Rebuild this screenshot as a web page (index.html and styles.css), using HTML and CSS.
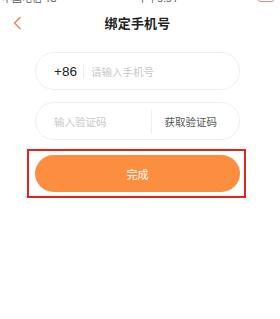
FILE: index.html
```html
<!DOCTYPE html>
<html lang="zh">
<head>
<meta charset="utf-8">
<link rel="stylesheet" href="styles.css">
</head>
<body>
<div class="status">
  <div class="status-inner">
    <span class="carrier">中国电信 4G</span>
    <span class="time">下午3:34</span>
    <span class="battery"></span>
  </div>
</div>
<header class="nav">
  <svg class="back" width="10" height="14" viewBox="0 0 10 14"><path d="M8 1.5 L2.5 7 L8 12.5" fill="none" stroke="#ec8a4c" stroke-width="1.6" stroke-linecap="round" stroke-linejoin="round"/></svg>
  <h1 class="title">绑定手机号</h1>
</header>
<main class="form">
  <div class="field">
    <span class="prefix">+86</span>
    <span class="vsep"></span>
    <span class="ph">请输入手机号</span>
  </div>
  <div class="field code">
    <span class="ph grow">输入验证码</span>
    <span class="vsep tall"></span>
    <span class="getcode">获取验证码</span>
  </div>
  <div class="highlight">
    <button class="submit">完成</button>
  </div>
</main>
</body>
</html>
```
FILE: styles.css
```css
* { box-sizing: border-box; }
html, body { margin: 0; padding: 0; background: #fff; }
body {
  width: 280px;
  height: 319px;
  overflow: hidden;
  font-family: "Noto Sans CJK SC", "Liberation Sans", sans-serif;
  color: #333;
}
.status {
  height: 3px;
  overflow: hidden;
  display: flex;
  align-items: flex-end;
}
.status-inner {
  width: 100%;
  height: 10px;
  flex: none;
  display: flex;
  justify-content: space-between;
  align-items: center;
  padding: 0 6px 0 2px;
  font-size: 10px;
  line-height: 10px;
  color: #555;
}
.battery { width: 16px; height: 7px; border: 1px solid #e88; border-radius: 2px; }
.nav {
  height: 38px;
  display: flex;
  align-items: center;
  position: relative;
  padding-left: 12px;
}
.back { display: block; margin-top: 2px; }
.title {
  position: absolute;
  left: 0; right: 5px;
  top: 0; bottom: 0;
  margin: 0;
  display: flex;
  align-items: center;
  justify-content: center;
  font-size: 13px;
  font-weight: 700;
  color: #222;
  letter-spacing: 0.2px;
}
.form {
  margin-top: 11px;
  margin-left: 35px;
  width: 205px;
  display: flex;
  flex-direction: column;
  gap: 12px;
}
.field {
  height: 38px;
  border: 1px solid #efefef;
  border-radius: 19px;
  display: flex;
  align-items: center;
  padding-left: 18px;
}
.prefix {
  font-family: "Liberation Sans", sans-serif;
  font-size: 13.5px;
  color: #222;
}
.vsep {
  width: 1px;
  height: 14px;
  background: #eee;
  margin: 0 7px 0 6px;
}
.vsep.tall { height: 25px; margin: 0 13px 0 0; }
.ph {
  font-size: 10.5px;
  color: #c8c8c8;
}
.grow { flex: 1; }
.getcode {
  font-size: 10.5px;
  color: #555;
  padding-right: 22px;
}
.highlight {
  margin-top: -3px;
  margin-left: -8px;
  width: 219px;
  border: 2px solid #e3241c;
  padding: 4px 4px 4px 6px;
}
.submit {
  display: block;
  width: 205px;
  height: 37px;
  border: none;
  border-radius: 19px;
  background: #fc8f3f;
  color: #fff;
  font-family: "Noto Sans CJK SC", sans-serif;
  font-size: 11px;
  padding: 0;
}
```
